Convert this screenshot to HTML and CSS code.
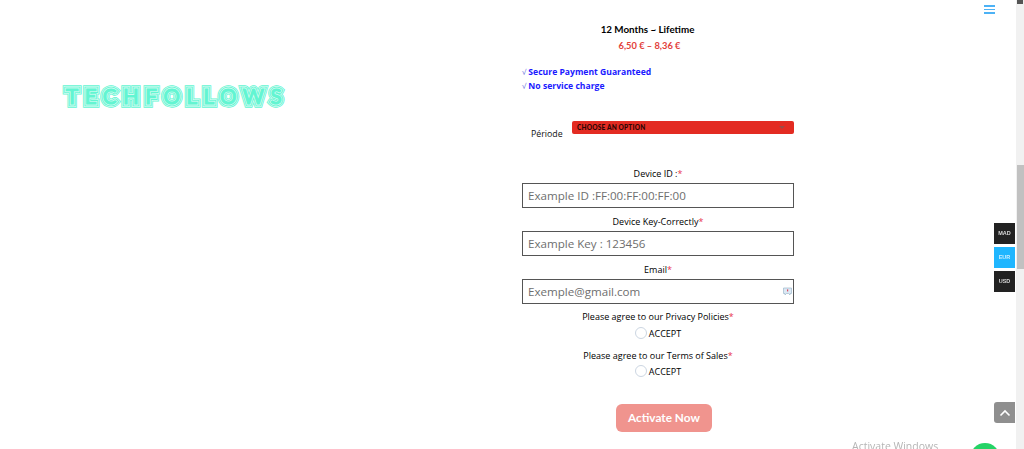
FILE: index.html
```html
<!DOCTYPE html>
<html lang="en">
<head>
    <meta charset="UTF-8">
    <meta name="viewport" content="width=device-width, initial-scale=1.0">
    <title>Techfollows - Activation</title>
    <link rel="stylesheet" href="styles.css">
</head>
<body>
    <div class="page">
        <!-- Logo column -->
        <div class="brand-col">
            <div class="brand-logo">
                <span class="logo-base">TECHFOLLOWS</span>
                <span class="logo-line line-2" aria-hidden="true">TECHFOLLOWS</span>
                <span class="logo-line line-3" aria-hidden="true">TECHFOLLOWS</span>
                <span class="logo-line line-4" aria-hidden="true">TECHFOLLOWS</span>
                <span class="logo-line line-5" aria-hidden="true">TECHFOLLOWS</span>
            </div>
        </div>

        <!-- Product form -->
        <div class="form-col">
            <div class="product-name">12 Months ~ Lifetime</div>
            <div class="product-price">6,50 € – 8,36 €</div>

            <ul class="perks">
                <li><span class="perk-tick">√</span> Secure Payment Guaranteed</li>
                <li><span class="perk-tick">√</span> No service charge</li>
            </ul>

            <div class="period-row">
                <span class="period-label">Période</span>
                <div class="period-select">
                    <span>CHOOSE AN OPTION</span>
                    <span class="period-arrow"></span>
                </div>
            </div>

            <label class="field-label first">Device ID :<span class="req">*</span></label>
            <div class="text-input">Example ID :FF:00:FF:00:FF:00</div>

            <label class="field-label">Device Key-Correctly<span class="req">*</span></label>
            <div class="text-input">Example Key : 123456</div>

            <label class="field-label">Email<span class="req">*</span></label>
            <div class="text-input has-icon">
                Exemple@gmail.com
                <svg class="autofill-icon" width="9" height="9" viewBox="0 0 9 9">
                    <path d="M.5 1h8v5.5H7V8L5.5 6.5h-2L2 8V6.5H.5z" fill="#dbe9f4" stroke="#9fb8cc" stroke-width=".7"/>
                    <rect x="4" y="2.4" width="1.2" height="2" fill="#e0475c"/>
                </svg>
            </div>

            <label class="field-label agree">Please agree to our Privacy Policies<span class="req">*</span></label>
            <div class="radio-row"><span class="radio"></span>ACCEPT</div>

            <label class="field-label agree second-agree">Please agree to our Terms of Sales<span class="req">*</span></label>
            <div class="radio-row"><span class="radio"></span>ACCEPT</div>

            <button class="activate-btn">Activate Now</button>
        </div>
    </div>

    <!-- Fixed overlays -->
    <div class="menu-icon"><span></span><span></span><span></span></div>

    <div class="currency-switch">
        <div class="currency">MAD</div>
        <div class="currency active">EUR</div>
        <div class="currency">USD</div>
    </div>

    <div class="back-top">
        <svg width="12" height="8" viewBox="0 0 12 8"><path d="M1.5 6.5 6 2l4.5 4.5" fill="none" stroke="#fff" stroke-width="1.6"/></svg>
    </div>

    <div class="activate-windows">Activate Windows</div>
    <div class="whatsapp"></div>

    <div class="scrollbar">
        <div class="scroll-arrow"></div>
        <div class="scroll-thumb"></div>
    </div>
</body>
</html>
```

FILE: styles.css
```css
/* Page */
html, body {
    margin: 0;
    height: 449px;
    overflow: hidden;
    background: #fff;
}

body {
    font-family: "Open Sans", "Noto Sans", sans-serif;
    color: #111;
}

.page {
    display: flex;
    align-items: flex-start;
}

/* Logo - same word stacked with thinner and thinner strokes gives the inline stripes */
.brand-col {
    width: 522px;
    padding: 79px 0 0 66px;
    box-sizing: border-box;
}

.brand-logo {
    position: relative;
    display: inline-block;
    font-family: "Lato", sans-serif;
    font-weight: 400;
    font-size: 20.5px;
    line-height: 34px;
    letter-spacing: 6.6px;
    white-space: nowrap;
}

.logo-base {
    color: #62f5d2;
    -webkit-text-stroke: 7.4px #62f5d2;
}

.logo-line {
    position: absolute;
    top: 0;
    left: 0;
}

.line-2 {
    color: #d0fcf1;
    -webkit-text-stroke: 6px #d0fcf1;
}

.line-3 {
    color: #62f5d2;
    -webkit-text-stroke: 4.4px #62f5d2;
}

.line-4 {
    color: #d0fcf1;
    -webkit-text-stroke: 2.8px #d0fcf1;
}

.line-5 {
    color: #62f5d2;
    -webkit-text-stroke: 1.2px #62f5d2;
}

/* Form column */
.form-col {
    width: 272px;
    padding-top: 22px;
    display: flex;
    flex-direction: column;
}

.product-name {
    font-family: "Lato", sans-serif;
    font-weight: 700;
    font-size: 9.8px;
    line-height: 14px;
    color: #000;
    text-align: center;
    padding-right: 21px;
}

.product-price {
    font-family: "Lato", sans-serif;
    font-weight: 700;
    font-size: 9.3px;
    line-height: 14px;
    color: #e2403a;
    text-align: center;
    margin-top: 3px;
    padding-right: 17px;
}

.perks {
    list-style: none;
    margin: 12px 0 0;
    padding: 0;
    font-size: 8.6px;
    font-weight: 700;
    line-height: 14px;
    color: #1a1aff;
}

.perks li {
    height: 14px;
}

.perk-tick {
    font-size: 7.5px;
    font-weight: 400;
    color: #5a6ad8;
}

.period-row {
    display: flex;
    margin-top: 28px;
    align-items: flex-start;
}

.period-label {
    width: 50px;
    padding: 6px 0 0 9px;
    box-sizing: border-box;
    font-size: 8.8px;
    font-weight: 500;
    line-height: 14px;
    color: #111;
}

.period-select {
    width: 222px;
    height: 13px;
    background: #e32b22;
    border-radius: 2px;
    display: flex;
    align-items: center;
    justify-content: space-between;
    padding: 0 5px;
    box-sizing: border-box;
    font-family: "Lato", sans-serif;
    font-weight: 900;
    font-size: 6.5px;
    letter-spacing: 0.2px;
    color: #2a0504;
}

.period-arrow {
    width: 0;
    height: 0;
    border-left: 3px solid transparent;
    border-right: 3px solid transparent;
    border-top: 3px solid #9c4a45;
    margin-right: 4px;
}

/* Fields */
.field-label {
    display: block;
    font-size: 9px;
    font-weight: 500;
    line-height: 12px;
    color: #000;
    text-align: center;
    margin: 8px 0 3px;
}

.field-label.first {
    margin-top: 27px;
}

.field-label.agree {
    margin: 7px 0 3px;
}

.field-label.second-agree {
    margin: 10px 0 2px;
}

.req {
    color: #e8344e;
}

.text-input {
    position: relative;
    height: 25px;
    border: 1px solid #555;
    box-sizing: border-box;
    padding-left: 5px;
    font-size: 11.6px;
    font-weight: 500;
    line-height: 23px;
    color: #6e6e6e;
}

.autofill-icon {
    position: absolute;
    right: 1px;
    top: 7px;
}

.radio-row {
    display: flex;
    justify-content: center;
    align-items: center;
    height: 14px;
    font-size: 9px;
    font-weight: 500;
    color: #000;
}

.radio {
    width: 10px;
    height: 10px;
    border: 1px solid #ccd6e2;
    border-radius: 50%;
    margin-right: 2px;
}

.activate-btn {
    align-self: center;
    margin: 26px 0 0 12px;
    width: 96px;
    height: 28px;
    border: none;
    border-radius: 6px;
    background: #f0948e;
    color: #fff;
    font-family: "Lato", sans-serif;
    font-weight: 700;
    font-size: 11.8px;
    padding: 0 0 2px;
}

/* Hamburger */
.menu-icon {
    position: fixed;
    top: 5px;
    left: 984px;
    width: 11px;
}

.menu-icon span {
    display: block;
    height: 1.5px;
    background: #4db2f5;
    margin-bottom: 2px;
}

/* Currency switch */
.currency-switch {
    position: fixed;
    left: 994px;
    top: 223px;
    width: 21px;
}

.currency {
    height: 21px;
    margin-bottom: 3px;
    background: #222;
    color: #d8d8d8;
    font-family: "Liberation Sans", sans-serif;
    font-size: 5.5px;
    font-weight: 700;
    line-height: 21px;
    text-align: center;
}

.currency.active {
    background: #1fb6ff;
    color: #cdeeff;
}

/* Back to top */
.back-top {
    position: fixed;
    left: 994px;
    top: 402px;
    width: 21px;
    height: 21px;
    background: #8f8f8f;
    border-radius: 3px 0 0 3px;
    display: flex;
    align-items: center;
    justify-content: center;
}

.activate-windows {
    position: fixed;
    left: 852px;
    top: 439px;
    font-size: 10.5px;
    line-height: 14px;
    color: #b5b5b5;
}

.whatsapp {
    position: fixed;
    left: 970px;
    top: 443px;
    width: 30px;
    height: 30px;
    border-radius: 50%;
    background: #25d366;
}

/* Scrollbar */
.scrollbar {
    position: fixed;
    top: 0;
    right: 0;
    width: 8px;
    height: 449px;
    background: #f1f1f1;
}

.scroll-arrow {
    position: absolute;
    top: 0;
    left: 1px;
    width: 6px;
    height: 4px;
    background: #555;
}

.scroll-thumb {
    position: absolute;
    top: 165px;
    left: 1px;
    width: 7px;
    height: 104px;
    background: #c1c1c1;
}
```
